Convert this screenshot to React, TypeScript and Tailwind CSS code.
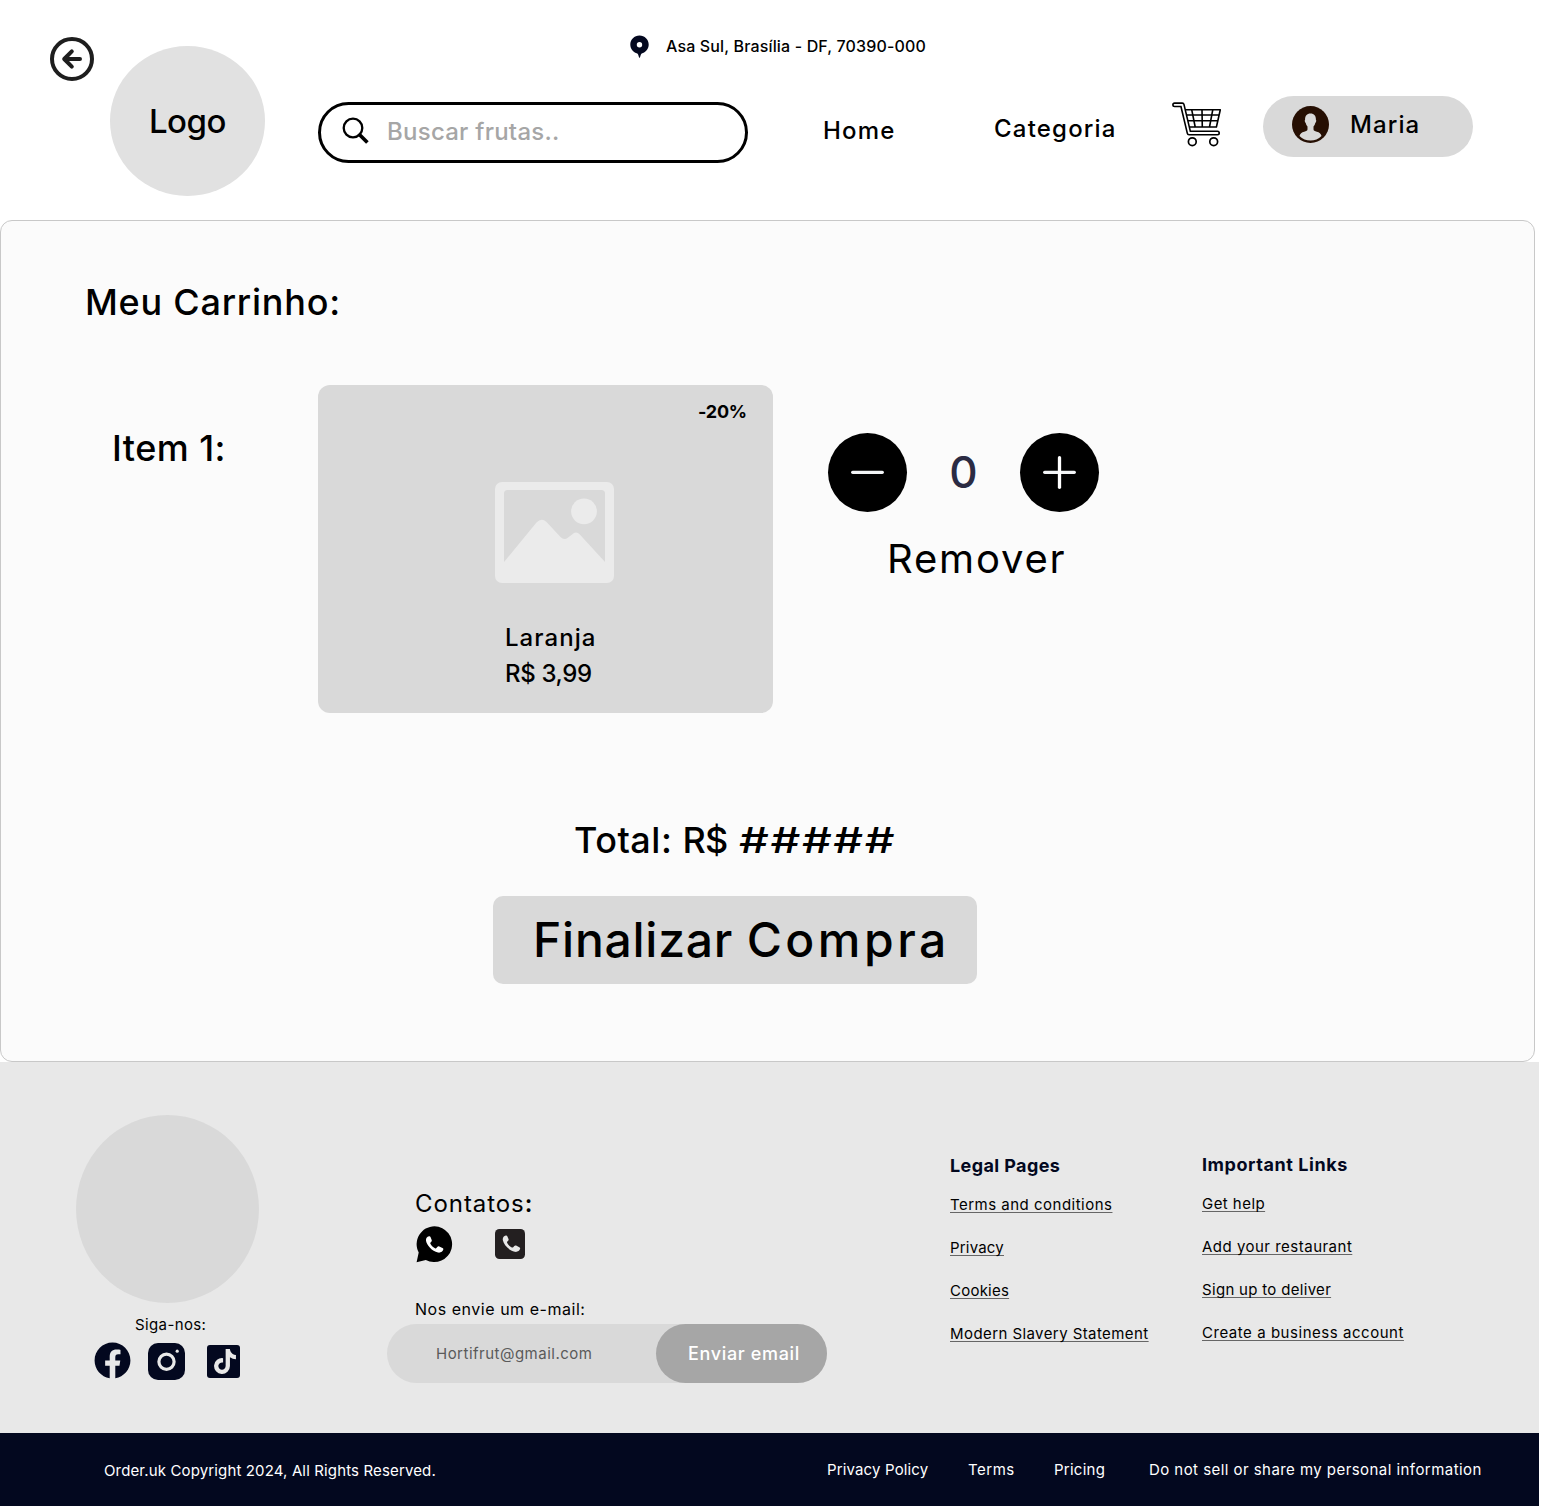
import React from 'react';
import { FaFacebook, FaTiktok } from 'react-icons/fa';

const HANDSET =
  'M3.5.5C1.5 1 .2 2.6.5 5c.8 4.500 6 10.500 12 11.800 2.500.4 4.800-.8 5.300-3 .2-.9-.2-1.300-.8-1.600l-3.200-1.600c-.8-.3-1.300-.2-1.800.4l-1.100 1.300c-.4.4-.9.4-1.400.1C7.200 11.200 5.800 9.600 4.900 7.900c-.3-.5-.2-.9.2-1.300l.9-1c.4-.5.4-.9.2-1.500L5 1.200C4.700.5 4.300.4 3.500.5z';

function BackIcon() {
  return (
    <svg width="44" height="44" viewBox="0 0 44 44" fill="none" stroke="#1e1e1e" strokeWidth="4">
      <circle cx="22" cy="22" r="20" />
      <path d="M30 22H14.500M21.800 14.300L14.200 22l7.600 7.700" strokeLinecap="round" strokeLinejoin="round" />
    </svg>
  );
}

function PinIcon() {
  return (
    <svg width="19" height="24" viewBox="0 0 19 24" fill="#03081f">
      <path d="M9.500 1.400C4.300 1.400 .3 5.400 .3 10.500c0 4.200 2.700 7.600 6.400 8.700.8.300 1.200.8 1.500 1.600l.8 2.400c.2.700.8.700 1 0l.8-2.400c.3-.8.7-1.300 1.500-1.600 3.700-1.100 6.400-4.500 6.400-8.700C18.700 5.400 14.700 1.400 9.500 1.400z" />
      <circle cx="9.500" cy="10.700" r="2.700" fill="#fff" />
    </svg>
  );
}

function SearchIcon() {
  return (
    <svg width="28" height="28" viewBox="0 0 28 28" fill="none" stroke="#000">
      <circle cx="11" cy="11" r="9.300" strokeWidth="2.300" />
      <path d="M16.500 16.800l2 2" strokeWidth="2.700" />
      <path d="M17.600 17.800l7.800 7.700" strokeWidth="3.700" />
    </svg>
  );
}

function CartIcon() {
  return (
    <svg width="50" height="46" viewBox="0 0 50 46" fill="none" stroke="#000" strokeLinejoin="round">
      <path d="M12.700 7.700H48.300L44.400 25H16M13.500 13H47M15 18.700H45.800" strokeWidth="1.600" />
      <path d="M19.700 7.700L23.200 25M30 7.700L30.300 25M40.800 7.700L37.500 25" strokeWidth="1.600" />
      <path d="M2.600 2.800H10.300L17 31H45.500" strokeWidth="5" strokeLinecap="round" />
      <path d="M2.600 2.800H10.300L17 31H45.500" stroke="#fff" strokeWidth="1.800" strokeLinecap="round" />
      <circle cx="20.300" cy="39.700" r="3.900" strokeWidth="1.700" />
      <circle cx="41.700" cy="39.700" r="3.900" strokeWidth="1.700" />
    </svg>
  );
}

function AvatarIcon() {
  return (
    <svg width="37" height="37" viewBox="0 0 37 37">
      <circle cx="18.500" cy="18.500" r="18.500" fill="#260f03" />
      <path
        fill="#d9d9d9"
        d="M18.500 7.600c-3.600 0-5.600 2.400-5.400 6.200-.7.300-.3 2.400.6 3.200.3 1.500.9 2.700 1.800 3.500v2.700c0 1.400-1.200 1.900-3.300 2.500-2.500.7-4.200 1.800-4.700 4.200 3 3 6.700 4.600 11 4.600s8-1.600 11-4.600c-.5-2.400-2.200-3.500-4.700-4.200-2.100-.6-3.300-1.100-3.300-2.500v-2.700c.9-.8 1.500-2 1.800-3.500.9-.8 1.300-2.900.6-3.200.2-3.800-1.800-6.200-5.400-6.200z"
      />
    </svg>
  );
}

function ImageIcon() {
  return (
    <svg width="119" height="101" viewBox="0 0 119 101">
      <rect width="119" height="101" rx="7" fill="#ebebeb" />
      <path
        fill="#d9d9d9"
        d="M9 80V11.500Q9 8 12.500 8H106.500Q110 8 110 11.500V80L84.800 52.500Q81.500 48.800 78 51.800L72.500 56Q69 58.500 65.500 55L51.500 40Q46.500 35.500 41.500 40.500z"
      />
      <circle cx="89" cy="29.300" r="12.900" fill="#ebebeb" />
    </svg>
  );
}

function InstagramIcon() {
  return (
    <svg width="37" height="37" viewBox="0 0 37 37">
      <rect width="37" height="37" rx="10" fill="#03081f" />
      <circle cx="18.500" cy="18.700" r="7.600" fill="none" stroke="#e8e8e8" strokeWidth="3.200" />
      <circle cx="29.200" cy="8.200" r="1.600" fill="#e8e8e8" />
    </svg>
  );
}

function WhatsappIcon() {
  return (
    <svg width="37" height="37" viewBox="0 0 37 37">
      <path d="M18.500.3A17.900 17.900 0 1 1 9.800 34L.6 36.300 2.700 26.600A17.900 17.900 0 0 1 18.500.3z" />
      <path d={HANDSET} transform="translate(9.500 9.800)" fill="#fff" />
    </svg>
  );
}

function PhoneIcon() {
  return (
    <svg width="30" height="30" viewBox="0 0 30 30">
      <rect width="30" height="30" rx="4.500" fill="#231f20" />
      <path d={HANDSET} transform="translate(7.300 6)" fill="#e8e8e8" />
    </svg>
  );
}

function RoundButton({ plus = false }: { plus?: boolean }) {
  return (
    <button className="flex size-[79px] items-center justify-center rounded-full bg-black">
      <svg width="33" height="33" viewBox="0 0 33 33" stroke="#f3f5f7" strokeWidth="3.300" strokeLinecap="round">
        <path d="M1.700 16.300H31.300" />
        {plus && <path d="M16.500 1.700V31.300" stroke="#fff" />}
      </svg>
    </button>
  );
}

function Header() {
  return (
    <header className="flex h-[220px] items-start">
      <button className="mt-[37px] ml-[50px]">
        <BackIcon />
      </button>
      <div className="mt-[46px] ml-4 flex h-[150px] w-[155px] items-center justify-center rounded-[50%] bg-[#e1e1e1] pt-0.5 text-[33px] font-medium tracking-[-0.446px]">
        Logo
      </div>
      <div className="ml-[53px] w-[1155px]">
        <div className="mt-[34px] ml-[312px] flex h-6 items-center gap-[17px]">
          <PinIcon />
          <span className="text-base leading-6 font-medium tracking-[0.15px]">Asa Sul, Brasília - DF, 70390-000</span>
        </div>
        <nav className="mt-[38px] flex items-start text-2xl leading-8 font-medium">
          <div className="mt-1.5 flex h-[61px] w-[430px] items-start rounded-full border-[3px] border-black pt-3 pl-[21px]">
            <SearchIcon />
            <span className="-mt-px ml-[17px] leading-8 tracking-[0.253px] text-[#a6a6a6]">Buscar frutas..</span>
          </div>
          <a className="mt-[19px] ml-[75px] w-[171px] tracking-[1.2px]">Home</a>
          <a className="mt-[17px] w-[178px] tracking-[1.2px]">Categoria</a>
          <div className="mt-1.5 w-[91px]">
            <CartIcon />
          </div>
          <div className="flex h-[61px] w-[210px] items-start rounded-full bg-[#d9d9d9] pt-2.5 pl-[29px]">
            <AvatarIcon />
            <span className="mt-[3px] ml-[21px] tracking-[1.1px]">Maria</span>
          </div>
        </nav>
      </div>
    </header>
  );
}

function Cart() {
  return (
    <main className="h-[842px] w-[1535px] rounded-xl border border-[#c8c8c8] bg-[#fbfbfb] pt-[59px]">
      <h1 className="ml-[84px] text-4xl leading-[44px] font-medium tracking-[0.77px]">Meu Carrinho:</h1>
      <div className="mt-[61px] flex items-start">
        <h2 className="mt-[41px] ml-[111px] w-[206px] text-4xl leading-[44px] font-medium tracking-[0.45px]">Item 1:</h2>
        <div className="flex h-[328px] w-[455px] flex-col rounded-xl bg-[#d9d9d9]">
          <span className="mt-[15px] mr-[26px] self-end text-lg leading-6 font-bold tracking-[-0.17px]">-20%</span>
          <div className="mt-[58px] ml-[177px]">
            <ImageIcon />
          </div>
          <div className="mt-[37px] ml-[187px] text-2xl leading-9 font-medium">
            <p className="tracking-[1.05px]">Laranja</p>
            <p className="tracking-[-0.359px]">R$ 3,99</p>
          </div>
        </div>
        <div className="mt-12 ml-[55px]">
          <div className="flex w-[271px] items-center justify-between">
            <RoundButton />
            <span className="pb-0.5 text-[44px] leading-[52px] font-medium text-[#2b2b43]">0</span>
            <RoundButton plus />
          </div>
          <p className="mt-[23px] ml-[59px] text-[40px] leading-[48px] tracking-[1.8px]">Remover</p>
        </div>
      </div>
      <p className="mt-[105px] ml-[573px] text-4xl leading-[44px] font-medium whitespace-pre">
        <span className="tracking-[0.5px]">Total: </span>
        <span className="tracking-[-0.6px]">R$ </span>
        <span className="ml-0.5 inline-block origin-left scale-x-[1.3] tracking-[1.2px]">#####</span>
      </p>
      <button className="mt-[34px] ml-[492px] flex h-[88px] w-[484px] items-center rounded-[10px] bg-[#d9d9d9] pb-px pl-10 text-5xl font-medium whitespace-pre">
        <span className="tracking-[0.75px]">Finalizar </span>
        <span className="tracking-[3.5px]">Compra</span>
      </button>
    </main>
  );
}

function Footer() {
  const link = 'w-max underline decoration-[#666666] decoration-1 underline-offset-[1.5px] [text-decoration-skip-ink:none]';
  return (
    <footer className="w-[1539px] text-[15px] leading-[22px]">
      <div className="flex h-[371px] items-start bg-[#e8e8e8]">
        <div className="mt-[53px] ml-[76px] w-[311px]">
          <div className="h-[188px] w-[183px] rounded-[50%] bg-[#d9d9d9]" />
          <p className="mt-[11px] ml-[59px] tracking-[0.38px]">Siga-nos:</p>
          <div className="mt-1.5 ml-[18px] flex items-start">
            <FaFacebook className="size-[37px] text-[#03081f]" />
            <div className="mt-px ml-[17px]">
              <InstagramIcon />
            </div>
            <div className="mt-[3px] ml-[22px] flex size-[33px] items-start justify-center rounded-[3px] bg-[#03081f] pt-1 pl-0.5">
              <FaTiktok className="h-[25px] w-[22px] text-[#e8e8e8]" />
            </div>
          </div>
        </div>
        <div className="mt-[126px] w-[440px]">
          <p className="ml-7 text-2xl leading-8 tracking-[0.93px]">
            Contatos<span className="font-semibold">:</span>
          </p>
          <div className="mt-1.5 ml-[29px] flex h-9 items-start gap-[42px]">
            <WhatsappIcon />
            <div className="mt-[3px]">
              <PhoneIcon />
            </div>
          </div>
          <p className="mt-[35px] ml-7 text-base leading-6 tracking-[0.529px]">Nos envie um e-mail:</p>
          <div className="mt-[3px] flex h-[59px] items-center rounded-full bg-[#d9d9d9] pl-[49px]">
            <span className="w-[220px] tracking-[0.49px] text-[#5a5a5a]">Hortifrut@gmail.com</span>
            <button className="h-[59px] w-[171px] rounded-full bg-[#a6a6a6] pl-8 text-left text-lg font-medium tracking-[0.656px] text-white">
              Enviar email
            </button>
          </div>
        </div>
        <div className="mt-[90px] ml-[123px] flex w-[252px] flex-col">
          <h3 className="mb-3.5 text-lg leading-7 font-bold tracking-[0.4px] text-[#03081f]">Legal Pages</h3>
          <div className="flex flex-col gap-[21px]">
            <a className={`${link} tracking-[0.49px]`}>Terms and conditions</a>
            <a className={`${link} tracking-[0.2px]`}>Privacy</a>
            <a className={`${link} tracking-[0.23px]`}>Cookies</a>
            <a className={`${link} tracking-[0.422px]`}>Modern Slavery Statement</a>
          </div>
        </div>
        <div className="mt-[89px] flex flex-col">
          <h3 className="mb-3.5 text-lg leading-7 font-bold tracking-[0.561px] text-[#03081f]">Important Links</h3>
          <div className="flex flex-col gap-[21px]">
            <a className={`${link} tracking-[0.45px]`}>Get help</a>
            <a className={`${link} tracking-[0.49px]`}>Add your restaurant</a>
            <a className={`${link} tracking-[0.31px]`}>Sign up to deliver</a>
            <a className={`${link} tracking-[0.538px]`}>Create a business account</a>
          </div>
        </div>
      </div>
      <div className="flex h-[73px] items-start bg-[#03081f] pt-[26px] pl-[104px] text-white">
        <span className="mt-px w-[723px] tracking-[0.14px]">Order.uk Copyright 2024, All Rights Reserved.</span>
        <span className="w-[141px] tracking-[0.15px]">Privacy Policy</span>
        <span className="w-[86px] tracking-[0.5px]">Terms</span>
        <span className="w-[95px] tracking-[0.25px]">Pricing</span>
        <span className="tracking-[0.445px]">Do not sell or share my personal information</span>
      </div>
    </footer>
  );
}

export default function App() {
  return (
    <div className="h-[1506px] w-[1542px] overflow-hidden bg-white font-['Inter',sans-serif] whitespace-nowrap text-black">
      <Header />
      <Cart />
      <Footer />
    </div>
  );
}
